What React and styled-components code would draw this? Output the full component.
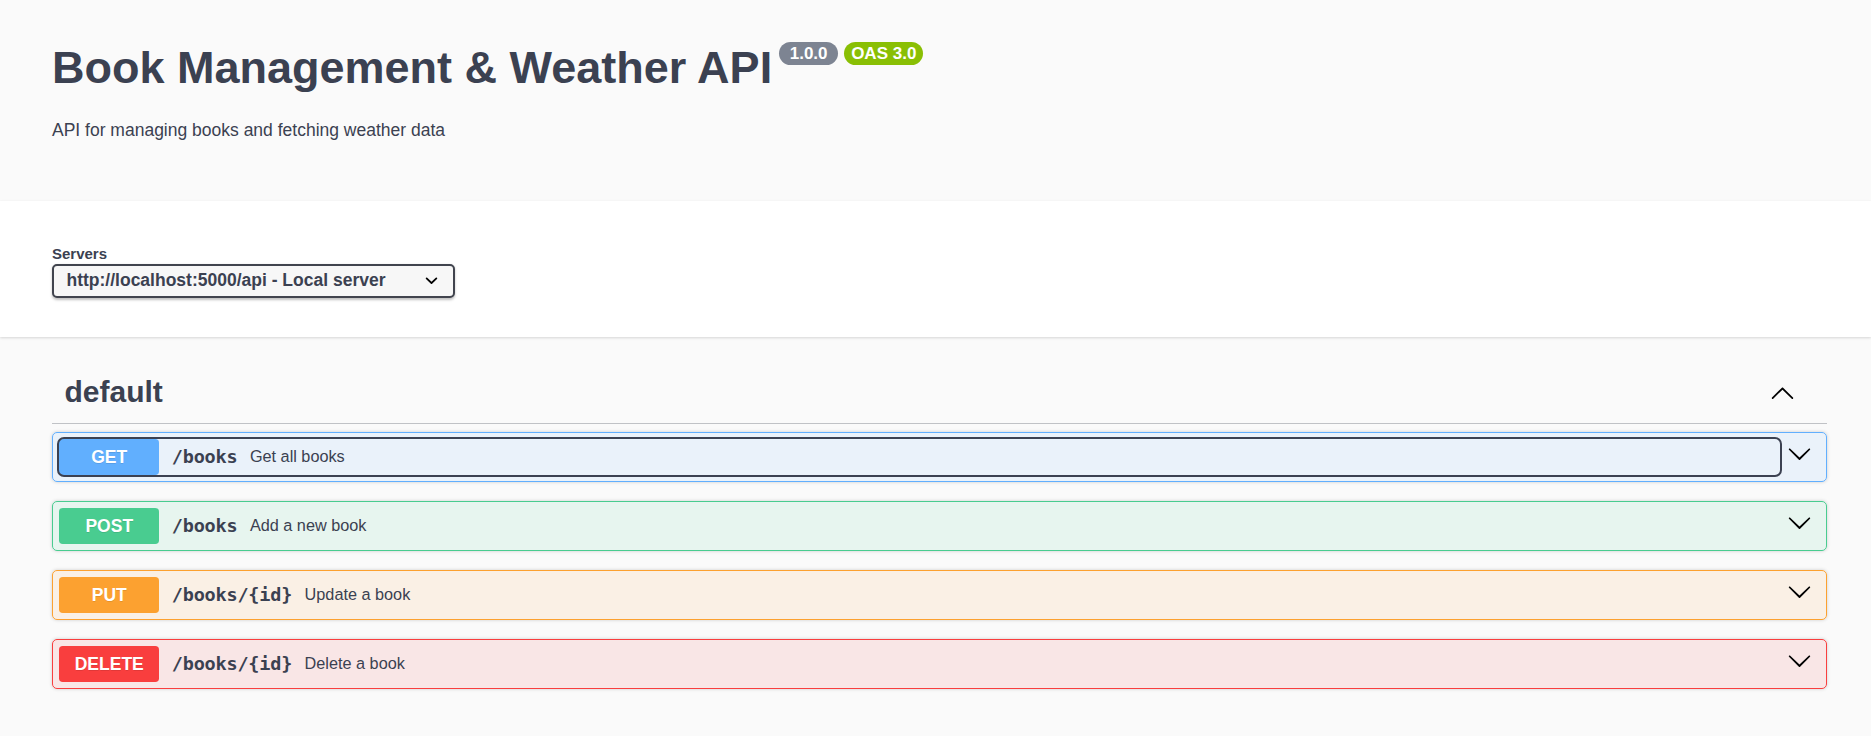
import React from 'react';
import styled, { createGlobalStyle } from 'styled-components';

const GlobalStyle = createGlobalStyle`
  html, body {
    margin: 0;
    padding: 0;
    background: #fafafa;
  }
  body {
    font-family: "Liberation Sans", Arial, sans-serif;
    color: #3b4151;
  }
  * {
    box-sizing: border-box;
  }
`;

// method colours, same as swagger-ui
const METHODS = {
  GET: { color: '#61affe', bg: 'rgba(97, 175, 254, 0.1)' },
  POST: { color: '#49cc90', bg: 'rgba(73, 204, 144, 0.1)' },
  PUT: { color: '#fca130', bg: 'rgba(252, 161, 48, 0.1)' },
  DELETE: { color: '#f93e3e', bg: 'rgba(249, 62, 62, 0.1)' },
};

const operations = [
  { method: 'GET', path: '/books', summary: 'Get all books', focused: true },
  { method: 'POST', path: '/books', summary: 'Add a new book' },
  { method: 'PUT', path: '/books/{id}', summary: 'Update a book' },
  { method: 'DELETE', path: '/books/{id}', summary: 'Delete a book' },
];

const Wrapper = styled.div`
  padding: 0 44px 0 52px;
`;

// Info block
const Info = styled.section`
  padding: 42px 0 61px;
`;

const TitleRow = styled.hgroup`
  display: flex;
  align-items: flex-start;
  margin: 0;
`;

const Title = styled.h2`
  margin: 0;
  font-size: 45px;
  line-height: 51.75px;
  font-weight: 700;
  color: #3b4151;
`;

const Badges = styled.div`
  display: flex;
  gap: 6px;
  margin: 0 0 0 7px;
`;

const Badge = styled.span`
  display: inline-block;
  min-width: 59px;
  padding: 2px 7px;
  border-radius: 57px;
  background: ${p => (p.tone === 'oas' ? '#89bf04' : '#7d8492')};
  color: #fff;
  font-size: 17px;
  line-height: 19px;
  font-weight: 700;
  text-align: center;
`;

const Description = styled.p`
  margin: 26px 0 0;
  font-size: 17.5px;
  line-height: 20px;
  color: #3b4151;
`;

// Servers bar
const SchemeContainer = styled.section`
  background: #fff;
  box-shadow: 0 1.25px 2.5px 0 rgba(0, 0, 0, 0.15);
  padding: 44px 0 39px;
`;

const ServersLabel = styled.label`
  display: flex;
  flex-direction: column;
  gap: 2px;
  font-size: 15px;
  line-height: 17px;
  font-weight: 700;
  color: #3b4151;
`;

const Select = styled.div`
  display: flex;
  align-items: center;
  justify-content: space-between;
  width: 403px;
  height: 34px;
  padding: 0 9.5px 0 12.5px;
  border: 2px solid #41444e;
  border-radius: 5px;
  background: #f7f7f7;
  box-shadow: 0 1.25px 2.5px 0 rgba(0, 0, 0, 0.25);
  font-size: 17.5px;
  font-weight: 700;
  color: #3b4151;
  cursor: pointer;
`;

// Operations
const Operations = styled.section`
  padding-top: 27.5px;
`;

const TagHeader = styled.h3`
  display: flex;
  align-items: center;
  margin: 0 0 7.5px;
  padding: 11px 25px 13.5px 12.5px;
  border-bottom: 1px solid rgba(59, 65, 81, 0.3);
  font-size: 30px;
  line-height: 34.5px;
  font-weight: 700;
  color: #3b4151;
  cursor: pointer;
`;

const IconButton = styled.button`
  display: flex;
  background: none;
  border: none;
  padding: 0 7.5px;
  margin-left: auto;
  cursor: pointer;
`;

const Opblock = styled.div`
  margin: 0 0 18.75px;
  border: 1px solid ${p => METHODS[p.method].color};
  border-radius: 5px;
  background: ${p => METHODS[p.method].bg};
  box-shadow: 0 0 3.75px rgba(0, 0, 0, 0.19);
`;

const Summary = styled.div`
  display: flex;
  align-items: center;
  padding: 6.25px;
  cursor: pointer;
`;

const SummaryControl = styled.div`
  flex: 1;
  display: flex;
  align-items: center;
  min-width: 0;
  border-radius: 5px;
  outline: ${p => (p.focused ? '2.5px solid #3b4151' : 'none')};
  outline-offset: -0.5px;
`;

const MethodBadge = styled.span`
  min-width: 100px;
  padding: 7.9px 0;
  border-radius: 3.75px;
  background: ${p => METHODS[p.method].color};
  color: #fff;
  font-size: 17.5px;
  line-height: 20px;
  font-weight: 700;
  text-align: center;
  text-shadow: 0 1px 0 rgba(0, 0, 0, 0.1);
`;

const Path = styled.span`
  padding: 0 12.5px;
  font-family: "DejaVu Sans Mono", "Liberation Mono", monospace;
  font-size: 18.5px;
  font-weight: 700;
  letter-spacing: -0.2px;
  color: #3b4151;
`;

const OpDescription = styled.span`
  font-size: 16.25px;
  color: #3b4151;
`;

const ArrowButton = styled.button`
  display: flex;
  align-self: flex-start;
  margin-top: 2px;
  padding: 0 7.5px;
  background: none;
  border: none;
  cursor: pointer;
`;

const ArrowDown = ({ size = 25 }) => (
  <svg width={size} height={size} viewBox="0 0 20 20" fill="#000">
    <path d="M17.418 6.109c.272-.268.709-.268.979 0s.271.701 0 .969l-7.908 7.83c-.27.268-.707.268-.979 0l-7.908-7.83c-.27-.268-.27-.701 0-.969.271-.268.709-.268.979 0L10 13.25l7.418-7.141z" />
  </svg>
);

const ArrowUp = () => (
  <svg width="25" height="25" viewBox="0 0 20 20" fill="#000">
    <path d="M17.418 14.908c.272.268.709.268.979 0s.271-.701 0-.969l-7.908-7.83c-.27-.268-.707-.268-.979 0l-7.908 7.83c-.27.268-.27.701 0 .969.271.268.709.268.979 0L10 7.767l7.418 7.141z" />
  </svg>
);

const SelectArrow = () => (
  <svg width="25" height="25" viewBox="0 0 20 20" fill="#000">
    <path d="M13.418 7.859a.695.695 0 0 1 .978 0 .68.68 0 0 1 0 .969l-3.908 3.83a.697.697 0 0 1-.979 0l-3.908-3.83a.68.68 0 0 1 0-.969.695.695 0 0 1 .978 0L10 11l3.418-3.141z" />
  </svg>
);

const Operation = ({ method, path, summary, focused }) => (
  <Opblock method={method}>
    <Summary>
      <SummaryControl focused={focused}>
        <MethodBadge method={method}>{method}</MethodBadge>
        <Path>{path}</Path>
        <OpDescription>{summary}</OpDescription>
      </SummaryControl>
      <ArrowButton aria-label="expand">
        <ArrowDown />
      </ArrowButton>
    </Summary>
  </Opblock>
);

export default function App() {
  return (
    <>
      <GlobalStyle />
      <Wrapper>
        <Info>
          <TitleRow>
            <Title>Book Management &amp; Weather API</Title>
            <Badges>
              <Badge>1.0.0</Badge>
              <Badge tone="oas">OAS 3.0</Badge>
            </Badges>
          </TitleRow>
          <Description>API for managing books and fetching weather data</Description>
        </Info>
      </Wrapper>

      <SchemeContainer>
        <Wrapper>
          <ServersLabel>
            Servers
            <Select>
              <span>http://localhost:5000/api - Local server</span>
              <SelectArrow />
            </Select>
          </ServersLabel>
        </Wrapper>
      </SchemeContainer>

      <Wrapper>
        <Operations>
          <TagHeader>
            <span>default</span>
            <IconButton aria-label="collapse">
              <ArrowUp />
            </IconButton>
          </TagHeader>
          {operations.map(op => (
            <Operation key={op.method} {...op} />
          ))}
        </Operations>
      </Wrapper>
    </>
  );
}
